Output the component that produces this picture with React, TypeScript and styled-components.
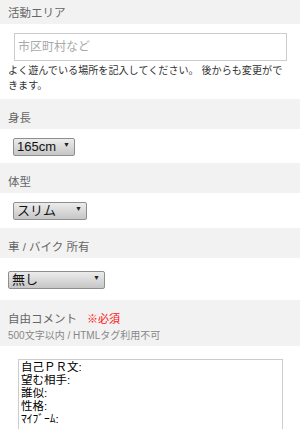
import React from 'react';
import styled, { createGlobalStyle } from 'styled-components';

const Global = createGlobalStyle`
  body {
    margin: 0;
    background: #fff;
    font-family: "Liberation Sans", "Noto Sans CJK JP", sans-serif;
    color: #333;
  }
`;

const Page = styled.div`
  width: 300px;
  margin-top: -6px;
`;

const Band = styled.div`
  background: #f2f2f2;
  padding: 12px 8px 4px;
`;

const Label = styled.div`
  font-size: 11.5px;
  line-height: 14px;
  color: #666;
`;

const Required = styled.span`
  color: #f11;
  font-size: 11px;
  margin-left: 10px;
`;

const Note = styled.div`
  font-size: 10px;
  line-height: 13px;
  color: #888;
  margin-top: 3px;
`;

const Body = styled.div<{ $pad: string }>`
  padding: ${p => p.$pad};
`;

const TextInput = styled.input`
  box-sizing: border-box;
  display: block;
  width: 273px;
  height: 28px;
  margin-left: 6px;
  border: 1px solid #ccc;
  border-radius: 0;
  padding: 0 3px;
  font-size: 12px;
  font-family: inherit;
  outline: none;
  &::placeholder { color: #aaa; }
`;

const Help = styled.p`
  margin: 2px 0 0;
  font-size: 10.1px;
  line-height: 15px;
  color: #333;
`;

const SelectBox = styled.div<{ $w: number; $x: number }>`
  position: relative;
  width: ${p => p.$w}px;
  height: 18px;
  margin-left: ${p => p.$x}px;
  &::after {
    content: '▼';
    position: absolute;
    right: 5px;
    top: 4px;
    font-size: 7px;
    color: #222;
    pointer-events: none;
  }
`;

const Select = styled.select`
  appearance: none;
  -webkit-appearance: none;
  box-sizing: border-box;
  width: 100%;
  height: 100%;
  border: 1px solid #8e8e8e;
  border-radius: 2px;
  background: linear-gradient(#ececec, #c6c6c6);
  font-family: "Liberation Sans", "Noto Sans CJK JP", sans-serif;
  font-size: 13px;
  color: #111;
  padding: 0 0 0 3px;
  margin: 0;
  line-height: 16px;
`;

const Area = styled.textarea`
  box-sizing: border-box;
  display: block;
  width: 265px;
  height: 140px;
  margin-left: 10px;
  border: 1px solid #ccc;
  padding: 1px 2px;
  font-family: "Liberation Sans", "Noto Sans CJK JP", sans-serif;
  font-size: 11.5px;
  line-height: 13px;
  color: #000;
  resize: none;
  outline: none;
`;

const comment = '自己ＰＲ文:\n望む相手:\n誰似:\n性格:\nﾏｲﾌﾞｰﾑ:\n';

export default function App() {
  return (
    <Page>
      <Global />
      <Band><Label>活動エリア</Label></Band>
      <Body $pad="9px 8px 6px">
        <TextInput placeholder="市区町村など" />
        <Help>よく遊んでいる場所を記入してください。 後からも変更ができます。</Help>
      </Body>

      <Band><Label>身長</Label></Band>
      <Body $pad="8px 8px 8px">
        <SelectBox $w={62} $x={5}>
          <Select defaultValue="165"><option value="165">165cm</option></Select>
        </SelectBox>
      </Body>

      <Band><Label>体型</Label></Band>
      <Body $pad="8px 8px 9px">
        <SelectBox $w={74} $x={5}>
          <Select defaultValue="slim"><option value="slim">スリム</option></Select>
        </SelectBox>
      </Body>

      <Band><Label>車 / バイク 所有</Label></Band>
      <Body $pad="12px 8px 12px">
        <SelectBox $w={97} $x={0}>
          <Select defaultValue="none"><option value="none">無し</option></Select>
        </SelectBox>
      </Body>

      <Band>
        <Label>自由コメント<Required>※必須</Required></Label>
        <Note>500文字以内 / HTMLタグ利用不可</Note>
      </Band>
      <Body $pad="13px 8px 10px">
        <Area defaultValue={comment} />
      </Body>
    </Page>
  );
}
